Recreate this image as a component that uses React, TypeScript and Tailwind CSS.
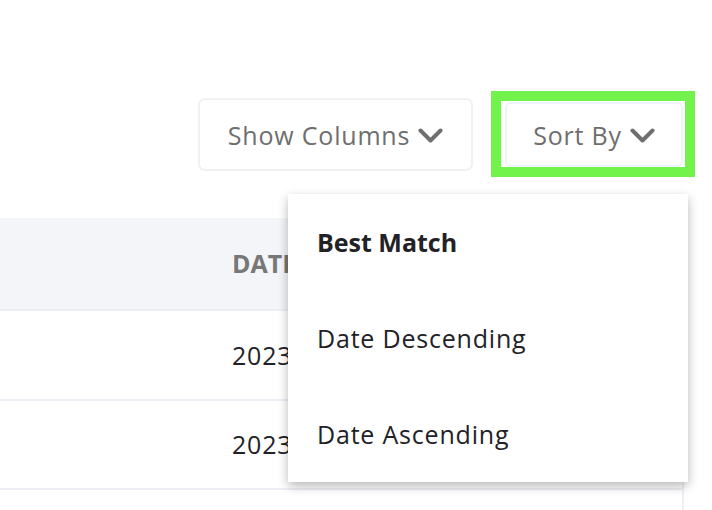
import React from "react";

function Chevron() {
  return (
    <svg width="25" height="16" viewBox="0 0 25 16" className="shrink-0">
      <path d="M2.5 2.5 L12.5 12.5 L22.5 2.5" fill="none" stroke="#6f6f6f" strokeWidth="4" strokeLinecap="round" strokeLinejoin="round" />
    </svg>
  );
}

export default function App() {
  return (
    <div
      className="relative w-[712px] h-[510px] overflow-hidden bg-white"
      style={{ fontFamily: "'Open Sans', Lato, sans-serif" }}
    >
      <div className="flex justify-end items-center gap-[18px] pt-[91px] pr-[17px]">
        <button className="flex items-center gap-[8px] w-[275px] h-[73px] justify-center pt-[3px] rounded-[7px] border-2 border-[#f1f1f3] bg-white text-[25px] tracking-[0.8px] text-[#6e6e6e]">
          <span>Show Columns</span>
          <Chevron />
        </button>
        <div className="flex w-[204px] h-[86px] border-[10px] border-[#72f34b]">
          <button className="flex flex-1 items-center justify-center gap-[8px] ml-[4px] mr-[2px] mt-[1px] pt-[3px] rounded-[6px] border-2 border-[#eef4fc] bg-white text-[25px] tracking-[0.8px] text-[#6e6e6e]">
            <span>Sort By</span>
            <Chevron />
          </button>
        </div>
      </div>

      <div className="mt-[41px] w-[684px] border-r-2 border-[#eeeef4]">
        <div className="flex h-[93px] items-center pt-[1px] bg-[#f4f5f8] border-b-2 border-[#eeeef4]">
          <div className="w-[232px]" />
          <div className="w-[56px] overflow-hidden whitespace-nowrap text-[25px] font-bold text-[#777777]">DATE</div>
        </div>
        <div className="flex h-[90px] items-center pt-[1px] border-b-2 border-[#eeeef4]">
          <div className="w-[232px]" />
          <div className="w-[56px] overflow-hidden whitespace-nowrap text-[25px] tracking-[0.8px] text-[#222226]">2023-05-12</div>
        </div>
        <div className="flex h-[89px] items-center pt-[1px] border-b-2 border-[#eeeef4]">
          <div className="w-[232px]" />
          <div className="w-[56px] overflow-hidden whitespace-nowrap text-[25px] tracking-[0.8px] text-[#222226]">2023-05-10</div>
        </div>
        <div className="h-[40px]" />
      </div>

      <div className="absolute left-[288px] top-[194px] w-[400px] bg-white shadow-[0_4px_10px_rgba(0,0,0,0.28)]">
        <div className="flex h-[96px] items-center pt-[1px] pl-[29px] text-[25px] font-bold text-[#222226]">Best Match</div>
        <div className="flex h-[96px] items-center pt-[1px] pl-[29px] text-[25px] tracking-[0.8px] text-[#222226]">Date Descending</div>
        <div className="flex h-[96px] items-center pt-[1px] pl-[29px] text-[25px] tracking-[0.8px] text-[#222226]">Date Ascending</div>
      </div>
    </div>
  );
}
